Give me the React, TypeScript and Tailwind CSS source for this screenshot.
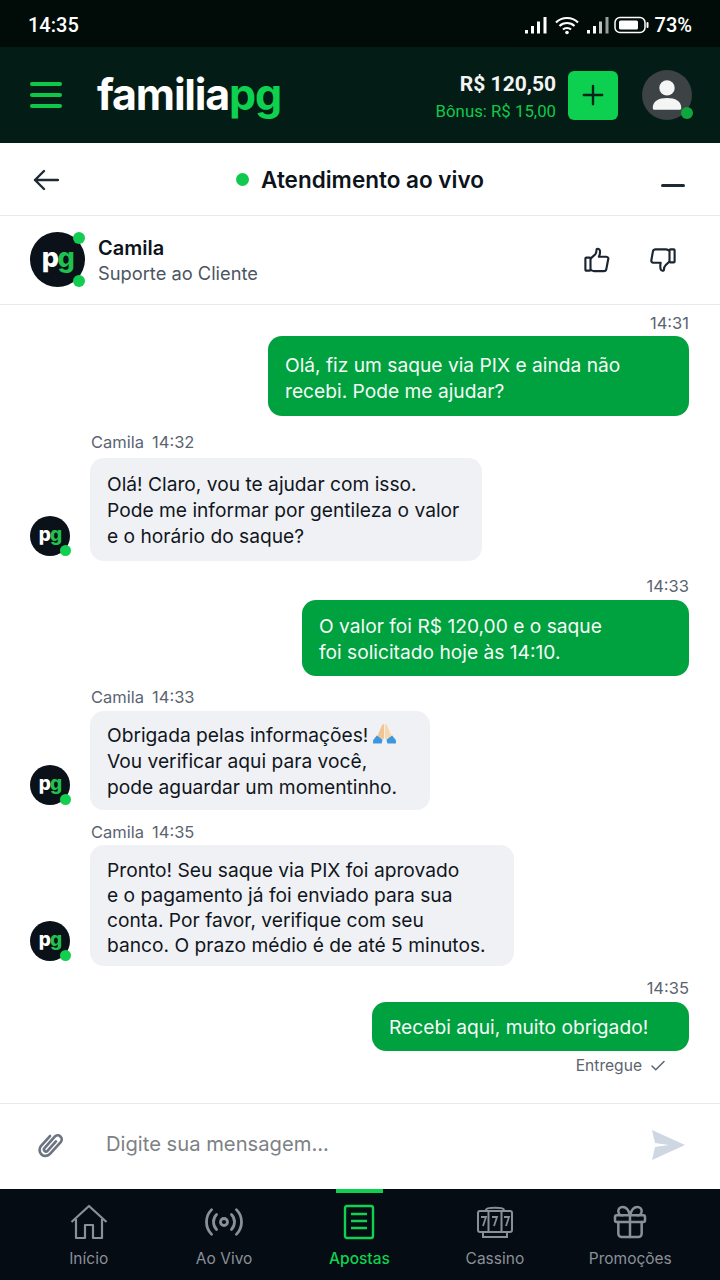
import { Check, Gift, Radio } from "lucide-react"

type Msg = {
  id: number
  mine: boolean
  time: string
  lines: string[]
  wrap: string
  bubble: string
  emoji?: boolean
}

const messages: Msg[] = [
  { id: 1, mine: true, time: "14:31", lines: ["Olá, fiz um saque via PIX e ainda não", "recebi. Pode me ajudar?"], wrap: "mt-[8px]", bubble: "mt-[3px] w-[421px] pt-[16px] pb-[12px] leading-[26px]" },
  { id: 2, mine: false, time: "14:32", lines: ["Olá! Claro, vou te ajudar com isso.", "Pode me informar por gentileza o valor", "e o horário do saque?"], wrap: "mt-4", bubble: "mt-[6px] w-[392px] pt-[13px] pb-[12px] leading-[26px]" },
  { id: 3, mine: true, time: "14:33", lines: ["O valor foi R$ 120,00 e o saque", "foi solicitado hoje às 14:10."], wrap: "mt-[15px]", bubble: "mt-1 w-[387px] pt-[13px] pb-[11px] leading-[26px]" },
  { id: 4, mine: false, time: "14:33", lines: ["Obrigada pelas informações!", "Vou verificar aqui para você,", "pode aguardar um momentinho."], wrap: "mt-[11px]", bubble: "mt-1 w-[340px] pt-[11px] pb-[10px] leading-[26px]", emoji: true },
  { id: 5, mine: false, time: "14:35", lines: ["Pronto! Seu saque via PIX foi aprovado", "e o pagamento já foi enviado para sua", "conta. Por favor, verifique com seu", "banco. O prazo médio é de até 5 minutos."], wrap: "mt-3", bubble: "mt-[3px] w-[424px] pt-[13px] pb-[8px] leading-[25px]" },
  { id: 6, mine: true, time: "14:35", lines: ["Recebi aqui, muito obrigado!"], wrap: "mt-3", bubble: "mt-1 w-[317px] pt-[12px] pb-[10px] leading-[27px]" },
]

function PgLogo({ small }: { small?: boolean }) {
  return (
    <div className={small ? "relative flex h-10 w-10 shrink-0 items-center justify-center rounded-full bg-[#0a1118]" : "relative flex h-[55px] w-[55px] shrink-0 items-center justify-center rounded-full bg-[#0a1118]"}>
      <span className={small ? "-mt-[3px] text-[19px] leading-none font-extrabold tracking-[-1px] text-white" : "-mt-1 text-[27px] leading-none font-extrabold tracking-[-1.500px] text-white"}>
        p<span className="text-[#1fc24e]">g</span>
      </span>
      {small ? (
        <span className="absolute right-[-1px] bottom-[0px] h-[11px] w-[11px] rounded-full bg-[#12cf50]" />
      ) : (
        <>
          <span className="absolute top-0 right-[0px] h-3 w-3 rounded-full bg-[#14cc52]" />
          <span className="absolute right-[0px] bottom-0 h-3 w-3 rounded-full bg-[#14cc52]" />
        </>
      )}
    </div>
  )
}

function Praying() {
  return (
    <svg viewBox="0 0 24 22" className="ml-[5px] inline-block h-[21px] w-[23px] align-[-2px]">
      <path d="M11.500 1c-1.500 0-2.500 1.500-3 3.500L4 15l7.500 2z" fill="#f0c596" />
      <path d="M12.500 1c1.500 0 2.500 1.500 3 3.500L20 15l-7.500 2z" fill="#f9d6ac" />
      <path d="M0 18 4 13l6 4.500L9 21.500H0z" fill="#3d97e0" />
      <path d="M24 18 20 13l-6 4.500 1 4h9z" fill="#3d97e0" />
    </svg>
  )
}

function StatusBars({ dim }: { dim?: boolean }) {
  return (
    <svg viewBox="0 0 22 18" className="h-[18px] w-[22px]" fill="white">
      <rect x="0" y="14" width="3" height="3.500" />
      <rect x="6" y="10" width="3" height="7.500" />
      <rect x="12" y="5.500" width="3" height="12" opacity={dim ? 0.75 : 1} />
      <rect x="18.500" y="1" width="3" height="16.500" opacity={dim ? 0.6 : 1} />
    </svg>
  )
}

function SlotIcon() {
  return (
    <svg viewBox="0 0 38 36" className="h-9 w-[38px]" fill="none" stroke="#8b9097" strokeWidth="2">
      <path d="M10 6c0-3 18-3 18 0" />
      <rect x="2" y="7" width="34" height="21" rx="2" />
      <path d="M12.500 7v21M25.500 7v21" />
      <path d="M7 28v5h24v-5" />
      <path d="M5 13h5l-3 9M16 13h5l-3 9M28 13h5l-3 9" strokeWidth="1.800" />
    </svg>
  )
}

export default function App() {
  return (
    <div className="flex h-[1280px] w-[720px] flex-col overflow-hidden bg-white font-['Inter',sans-serif]">
      {/* status bar */}
      <div className="flex h-[47px] items-center justify-between bg-[#010c08] px-[28px] font-['Roboto',sans-serif] text-white">
        <span className="mt-[2px] text-[20px] font-medium">14:35</span>
        <div className="mt-[2px] flex items-center">
          <StatusBars />
          <svg viewBox="0 0 24 20" className="ml-2 h-5 w-6" fill="none" stroke="white" strokeWidth="2.200">
            <path d="M1 7.500c6-6 16-6 22 0M4.500 11c4-4 11-4 15 0M8 14.500c2-2 6-2 8 0" />
            <circle cx="12" cy="17.500" r="1.800" fill="white" stroke="none" />
          </svg>
          <div className="ml-2"><StatusBars dim /></div>
          <svg viewBox="0 0 35 18" className="ml-[5px] h-[18px] w-[35px]" fill="none">
            <rect x="1" y="1.500" width="30" height="15" rx="5" stroke="white" strokeWidth="1.500" />
            <rect x="5" y="4.500" width="19" height="9" rx="1.500" fill="white" />
            <rect x="32.500" y="6" width="2" height="6" rx="1" fill="white" />
          </svg>
          <span className="ml-[6px] text-[20px] font-medium">73%</span>
        </div>
      </div>

      {/* app header */}
      <div className="flex h-[96px] items-center bg-[#031c16] pr-[28px] pl-[30px]">
        <div className="flex w-8 flex-col gap-[7px]">
          <span className="h-1 rounded-sm bg-[#0fc84a]" />
          <span className="h-1 rounded-sm bg-[#0fc84a]" />
          <span className="h-1 rounded-sm bg-[#0fc84a]" />
        </div>
        <div className="-mt-[2px] ml-[35px] text-[43px] leading-none font-bold tracking-[-1.200px] text-white">
          familia<span className="text-[#0dd14f]">pg</span>
        </div>
        <div className="ml-auto pt-[2px] text-right font-['Roboto',sans-serif]">
          <div className="text-[21px] leading-[24px] font-bold text-[#f2f4f3]">R$ 120,50</div>
          <div className="mt-[5px] text-[16.800px] leading-[20px] text-[#10c94b]">Bônus: R$ 15,00</div>
        </div>
        <div className="ml-3 flex h-[49px] w-[50px] items-center justify-center rounded-md bg-[#0dd050]">
          <svg viewBox="0 0 24 24" className="h-[22px] w-[22px]" stroke="#06261a" strokeWidth="2.600" strokeLinecap="round">
            <path d="M12 2v20M2 12h20" />
          </svg>
        </div>
        <div className="relative ml-6 flex h-[50px] w-[50px] items-center justify-center rounded-full bg-[#3d4245]">
          <svg viewBox="0 0 32 32" className="h-[38px] w-[38px]" fill="#f4f5f5">
            <circle cx="16" cy="10" r="6.500" />
            <path d="M4 27c0-6 5-8.500 12-8.500S28 21 28 27c0 1-.5 1.500-1.500 1.500h-21C4.500 28.500 4 28 4 27z" />
          </svg>
          <span className="absolute right-[-1px] bottom-[1px] h-3 w-3 rounded-full bg-[#0fa63e]" />
        </div>
      </div>

      {/* chat title */}
      <div className="mt-px flex h-[71px] items-center justify-between pr-[35px] pl-[33px]">
        <svg viewBox="0 0 26 22" className="h-[22px] w-[26px]" fill="none" stroke="#1d2a36" strokeWidth="2.400" strokeLinecap="round" strokeLinejoin="round">
          <path d="M11 2 2 11l9 9M2 11h23" />
        </svg>
        <div className="flex items-center">
          <span className="h-[13px] w-[13px] rounded-full bg-[#10c94e]" />
          <span className="ml-[12px] text-[22.500px] font-semibold text-[#0c131b]">Atendimento ao vivo</span>
        </div>
        <span className="mt-3 h-[3px] w-6 rounded-sm bg-[#1d2a36]" />
      </div>

      {/* agent row */}
      <div className="flex h-[90px] items-center border-y border-[#e7e9ee] pr-[44px] pl-[30px]">
        <div className="-mt-[2px]"><PgLogo /></div>
        <div className="-ml-[1px] pl-[14px]">
          <div className="text-[20px] leading-[26px] font-semibold text-[#0d141c]">Camila</div>
          <div className="text-[18.300px] leading-[24px] text-[#4b5563]">Suporte ao Cliente</div>
        </div>
        <div className="ml-auto flex items-center gap-[40px]">
          <svg viewBox="0 0 28 28" className="h-[26px] w-[26px]" fill="none" stroke="#1b2530" strokeWidth="2.300" strokeLinejoin="round">
            <rect x="1.500" y="11.500" width="5.500" height="14" rx="1" />
            <path d="M7 12.500 12 8c1.500-1.500 1.500-3.500 1.500-5 0-1.500 3-1.500 3.500.5.500 2 0 5-1 7h8c2 0 2.500 2 2 3l-2 10.500c-.3 1.500-1.500 2-2.500 2H11c-2 0-3-1-4-1.500" />
          </svg>
          <svg viewBox="0 0 28 28" className="h-[26px] w-[26px]" fill="none" stroke="#1b2530" strokeWidth="2.300" strokeLinejoin="round">
            <rect x="21" y="2.500" width="5.500" height="14" rx="1" />
            <path d="M21 4c-1-.5-2-1.500-4-1.500H6c-1.500 0-2.500.8-2.800 2L1.500 14c-.3 1.500.5 3 2 3h8c-.5 2-.5 5 0 7s3.500 2 3.500.5c0-1.500.5-3.500 2-5l4-4" />
          </svg>
        </div>
      </div>

      {/* messages */}
      <div className="flex-1 pr-[31px] pl-[30px] text-[19.200px] text-[#10161d]">
        {messages.map((m) =>
          m.mine ? (
            <div key={m.id} className={`flex flex-col items-end ${m.wrap}`}>
              <span className="text-[16.500px] leading-5 text-[#5b6470]">{m.time}</span>
              <div className={`rounded-[14px] bg-[#00a13f] pl-[17px] text-[#f7fbf8] ${m.bubble}`}>
                {m.lines.map((line) => (
                  <div key={line}>{line}</div>
                ))}
              </div>
            </div>
          ) : (
            <div key={m.id} className={m.wrap}>
              <div className="ml-[61px] flex gap-[8px] text-[16.500px] leading-5 text-[#5b6470]">
                <span>Camila</span>
                <span>{m.time}</span>
              </div>
              <div className="flex items-end gap-5">
                <div className="mb-[5px]">
                  <PgLogo small />
                </div>
                <div className={`rounded-[14px] bg-[#f0f1f4] pl-[17px] ${m.bubble}`}>
                  {m.lines.map((line, idx) => (
                    <div key={line}>
                      {line}
                      {m.emoji && idx === 0 ? <Praying /> : null}
                    </div>
                  ))}
                </div>
              </div>
            </div>
          ),
        )}
        <div className="mt-[5px] flex items-center justify-end gap-[7px] pr-[22px] text-[15.600px] leading-5 text-[#5b6470]">
          <span>Entregue</span>
          <Check className="h-[18px] w-[18px]" strokeWidth={2} />
        </div>
      </div>

      {/* composer */}
      <div className="flex h-[86px] items-center border-t border-[#e7e9ee] pr-[35px] pb-[4px] pl-[34px]">
        <svg viewBox="0 0 24 24" className="h-[32px] w-[32px] rotate-[42deg]" fill="none" stroke="#6b7480" strokeWidth="2" strokeLinecap="round">
          <path d="M7.500 7v10a4.500 4.500 0 0 0 9 0V5a3 3 0 0 0-6 0v11.500a1.500 1.500 0 0 0 3 0V7" />
        </svg>
        <span className="ml-[40px] text-[20.200px] text-[#7d8185]">Digite sua mensagem...</span>
        <svg viewBox="0 0 33 30" className="ml-auto h-[30px] w-[33px]" fill="#cfd7e2">
          <path d="M0 0 33 15 0 30l3-13 14-2-14-2z" />
        </svg>
      </div>

      {/* bottom nav */}
      <div className="relative grid h-[91px] grid-cols-5 bg-[#050c14] pt-[15px] pr-[22px] pl-[21px] text-[15.500px] text-[#8b9097]">
        <span className="absolute top-0 left-[336px] h-1 w-[47px] bg-[#0dd04f]" />
        <div className="flex flex-col items-center">
          <svg viewBox="0 0 38 36" className="h-9 w-[38px]" fill="none" stroke="#8b9097" strokeWidth="2.200" strokeLinejoin="round">
            <path d="M1.500 18 19 2l17.500 16M6 15v19h9V21h8v13h9V15" />
          </svg>
          <span className="mt-[9px] leading-5">Início</span>
        </div>
        <div className="flex flex-col items-center">
          <Radio className="-my-[3px] h-[42px] w-[42px] text-[#8b9097]" strokeWidth={1.600} />
          <span className="mt-[9px] leading-5">Ao Vivo</span>
        </div>
        <div className="flex flex-col items-center text-[#0fd24f]">
          <svg viewBox="0 0 32 36" className="h-9 w-8" fill="none" stroke="#0fd24f" strokeWidth="2.400">
            <rect x="2" y="2" width="28" height="32" rx="2" />
            <path d="M8 10h16M8 17h16M8 24h16" />
          </svg>
          <span className="mt-[9px] leading-5 font-medium">Apostas</span>
        </div>
        <div className="flex flex-col items-center">
          <SlotIcon />
          <span className="mt-[9px] leading-5">Cassino</span>
        </div>
        <div className="flex flex-col items-center">
          <Gift className="-my-[2px] h-[40px] w-[40px] text-[#8b9097]" strokeWidth={1.500} />
          <span className="mt-[9px] leading-5">Promoções</span>
        </div>
      </div>
    </div>
  )
}
